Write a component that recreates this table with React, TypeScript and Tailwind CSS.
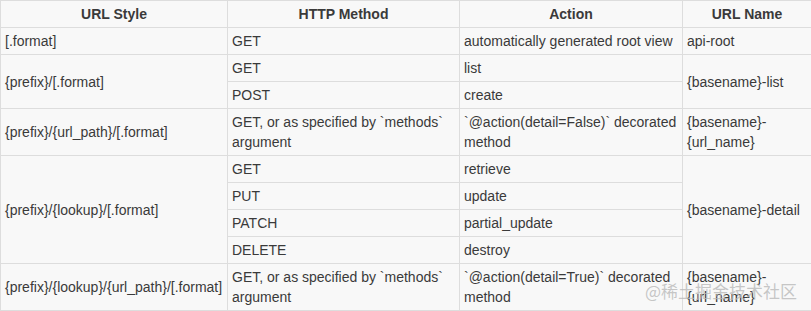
import React from "react";

const td = "border border-[#dddddd] px-[4px] py-[3px] align-middle text-left font-normal";
const th = "border border-[#dddddd] px-[4px] py-[3px] align-middle text-center font-bold";

export default function App() {
  return (
    <div className="relative w-[811px] h-[311px] bg-[#f8f8f8] overflow-hidden" style={{ fontFamily: '"Liberation Sans", Arial, sans-serif' }}>
      <table className="table-fixed border-collapse w-[811px] text-[14px] leading-[20px] text-[#3a3a3a] border border-[#a3a3a3]">
        <colgroup>
          <col className="w-[227px]" />
          <col className="w-[232px]" />
          <col className="w-[223px]" />
          <col className="w-[129px]" />
        </colgroup>
        <thead>
          <tr>
            <th className={th}>URL Style</th>
            <th className={th}>HTTP Method</th>
            <th className={th}>Action</th>
            <th className={th}>URL Name</th>
          </tr>
        </thead>
        <tbody>
          <tr>
            <td className={td}>[.format]</td>
            <td className={td}>GET</td>
            <td className={td}>automatically generated root view</td>
            <td className={td}>api-root</td>
          </tr>
          <tr>
            <td className={td} rowSpan={2}>{"{prefix}/[.format]"}</td>
            <td className={td}>GET</td>
            <td className={td}>list</td>
            <td className={td} rowSpan={2}>{"{basename}-list"}</td>
          </tr>
          <tr>
            <td className={td}>POST</td>
            <td className={td}>create</td>
          </tr>
          <tr>
            <td className={td}>{"{prefix}/{url_path}/[.format]"}</td>
            <td className={td}>GET, or as specified by `methods` argument</td>
            <td className={td}>`@action(detail=False)` decorated method</td>
            <td className={td}>{"{basename}-{url_name}"}</td>
          </tr>
          <tr>
            <td className={td} rowSpan={4}>{"{prefix}/{lookup}/[.format]"}</td>
            <td className={td}>GET</td>
            <td className={td}>retrieve</td>
            <td className={td} rowSpan={4}>{"{basename}-detail"}</td>
          </tr>
          <tr>
            <td className={td}>PUT</td>
            <td className={td}>update</td>
          </tr>
          <tr>
            <td className={td}>PATCH</td>
            <td className={td}>partial_update</td>
          </tr>
          <tr>
            <td className={td}>DELETE</td>
            <td className={td}>destroy</td>
          </tr>
          <tr>
            <td className={td}>{"{prefix}/{lookup}/{url_path}/[.format]"}</td>
            <td className={td}>GET, or as specified by `methods` argument</td>
            <td className={td}>`@action(detail=True)` decorated method</td>
            <td className={td}>{"{basename}-{url_name}"}</td>
          </tr>
        </tbody>
      </table>
      <div
        className="absolute left-[645px] top-[279px] text-[17px] leading-[24px] text-[#b8b8b8]/80 whitespace-nowrap pointer-events-none"
        style={{ fontFamily: '"Noto Sans CJK SC", "Liberation Sans", sans-serif' }}
      >
        @稀土掘金技术社区
      </div>
    </div>
  );
}
